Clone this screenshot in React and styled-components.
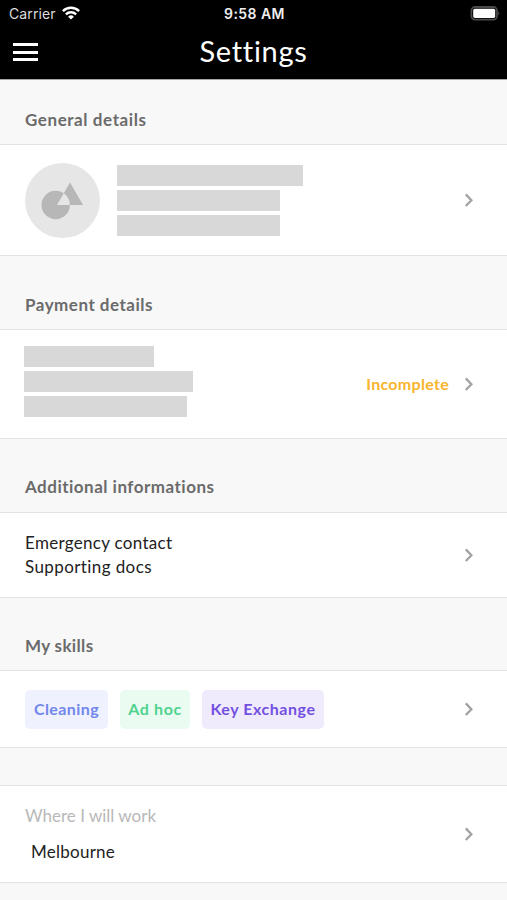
import React from 'react';
import styled, { createGlobalStyle } from 'styled-components'

const GlobalStyle = createGlobalStyle`
    * {
        box-sizing: border-box;
    }
    body {
        margin: 0;
        background: #f8f8f8;
        font-family: Lato, "Open Sans", sans-serif;
        font-size: 17px;
        font-variant-ligatures: none;
        color: #222;
        overflow: hidden;
    }
`

const Screen = styled.div`
    width: 100%;
    height: 900px;
    overflow: hidden;
    background: #f8f8f8;
`

const Header = styled.header`
    height: 80px;
    background: #000;
    color: #fff;
    border-bottom: 1px solid #a6a6a6;
`

const StatusBar = styled.div`
    display: grid;
    grid-template-columns: 1fr auto 1fr;
    align-items: center;
    height: 27px;
    padding: 0 6px 0 9px;
    font-family: Inter, sans-serif;
    font-size: 14px;
    line-height: 27px;
`

const Carrier = styled.div`
    display: flex;
    align-items: center;
    gap: 6px;
    color: #ddd;
    letter-spacing: .1px;
    svg {
        display: block;
        margin-top: -2px;
    }
`

const Clock = styled.div`
    margin-left: -1px;
    font-weight: 600;
    color: #eee;
    letter-spacing: .45px;
`

const Battery = styled.svg`
    justify-self: end;
`

const TitleBar = styled.div`
    display: grid;
    grid-template-columns: 26px 1fr 26px;
    align-items: center;
    height: 50px;
    padding: 0 13px;
    h1 {
        margin: -2px 0 0;
        font-size: 29px;
        font-weight: 400;
        line-height: 50px;
        text-align: center;
        letter-spacing: .7px;
    }
`

const MenuButton = styled.button`
    display: flex;
    flex-direction: column;
    gap: 4.5px;
    padding: 0;
    border: none;
    background: none;
    span {
        width: 25px;
        height: 3px;
        background: #fff;
    }
`

const SectionTitle = styled.h2`
    display: flex;
    align-items: flex-end;
    height: ${props => props.$height}px;
    margin: 0;
    padding: 0 25px ${props => props.$bottom || 12}px;
    font-size: 17px;
    font-weight: 700;
    line-height: 24px;
    color: #6b6b6b;
    letter-spacing: ${props => props.$spacing || 0}px;
`

const Row = styled.div`
    display: flex;
    align-items: center;
    height: ${props => props.$height}px;
    padding: 0 32px 0 25px;
    background: #fff;
    border-top: 1px solid #e2e2e2;
    border-bottom: 1px solid #e2e2e2;
`

const RowBody = styled.div`
    display: flex;
    flex: 1;
    align-items: center;
`

const Avatar = styled.svg`
    display: block;
    margin-right: 17px;
`

const Bars = styled.div`
    display: flex;
    flex-direction: column;
    gap: 4px;
    margin: ${props => props.$margin || 0};
`

const Bar = styled.div`
    width: ${props => props.$width}px;
    height: 21px;
    background: #d8d8d8;
`

const Status = styled.span`
    margin: -2px 14px 0 0;
    font-size: 16px;
    font-weight: 700;
    color: #f9b42d;
    letter-spacing: .3px;
`

const Line = styled.div`
    font-size: 17px;
    line-height: 24px;
    letter-spacing: ${props => props.$spacing || 0}px;
`

const Tags = styled.div`
    display: flex;
    gap: 12px;
`

const Tag = styled.span`
    width: ${props => props.$width}px;
    height: 39px;
    border-radius: 5px;
    font-size: 16px;
    font-weight: 700;
    line-height: 38px;
    text-align: center;
    white-space: nowrap;
    color: ${props => props.$color};
    background: ${props => props.$background};
    letter-spacing: ${props => props.$spacing || 0}px;
`

const Location = styled.div`
    display: flex;
    flex-direction: column;
    gap: 12px;
`

const LocationLabel = styled(Line)`
    color: #b8b8b8;
`

const LocationName = styled(Line)`
    padding-left: 6px;
`

const Spacer = styled.div`
    height: 37px;
`

const Arrow = () => (
    <svg width="12" height="16" viewBox="0 0 12 16">
        <path d="M2.8 2.4 L8.4 8.2 L2.8 14" fill="none" stroke="#a2a2a2" strokeWidth="2.3" />
    </svg>
)

const skills = [
    { name: 'Cleaning', width: 83, spacing: .4, color: '#7287ea', background: '#eff1fe' },
    { name: 'Ad hoc', width: 70, spacing: .65, color: '#4fd38f', background: '#eafbf2' },
    { name: 'Key Exchange', width: 122, spacing: .55, color: '#7351e0', background: '#f0eafd' }
]

const App = () => (
    <Screen>
        <GlobalStyle />
        <Header>
            <StatusBar>
                <Carrier>
                    Carrier
                    <svg width="18" height="14" viewBox="0 0 18 14">
                        <g fill="none" stroke="#fff" strokeWidth="2.4">
                            <path d="M.9 5.2 A11.4 11.4 0 0 1 17.1 5.2" />
                            <path d="M3.9 8.4 A7.2 7.2 0 0 1 14.1 8.4" />
                        </g>
                        <path d="M9 13.6 L6.1 10.7 A4.1 4.1 0 0 1 11.9 10.7 Z" fill="#fff" />
                    </svg>
                </Carrier>
                <Clock>9:58 AM</Clock>
                <Battery width="31" height="15" viewBox="0 0 31 15">
                    <rect x="1.4" y="1" width="25.6" height="12.6" rx="3.6" fill="none" stroke="#4a4a4a" strokeWidth="1.8" />
                    <rect x="3.2" y="2.7" width="22" height="9.2" rx="1.6" fill="#fff" />
                    <path d="M28.3 5 Q30.6 7.3 28.3 9.6 Z" fill="#4a4a4a" />
                </Battery>
            </StatusBar>
            <TitleBar>
                <MenuButton aria-label="Menu">
                    <span />
                    <span />
                    <span />
                </MenuButton>
                <h1>Settings</h1>
            </TitleBar>
        </Header>

        <SectionTitle $height={64} $spacing={.58}>General details</SectionTitle>
        <Row $height={112}>
            <RowBody>
                <Avatar width="75" height="75" viewBox="0 0 75 75">
                    <circle cx="37.5" cy="37.5" r="37.5" fill="#e6e6e6" />
                    <path
                        fill="#b7b7b7"
                        fillRule="evenodd"
                        d="M16.5 42 a14.2 14.2 0 1 0 28.4 0 a14.2 14.2 0 1 0 -28.4 0 Z M45 19.5 L58 42 L32 42 Z"
                    />
                </Avatar>
                <Bars>
                    <Bar $width={186} />
                    <Bar $width={163} />
                    <Bar $width={163} />
                </Bars>
            </RowBody>
            <Arrow />
        </Row>

        <SectionTitle $height={73} $spacing={.5}>Payment details</SectionTitle>
        <Row $height={110}>
            <RowBody>
                <Bars $margin="-6px 0 0 -1px">
                    <Bar $width={130} />
                    <Bar $width={169} />
                    <Bar $width={163} />
                </Bars>
            </RowBody>
            <Status>Incomplete</Status>
            <Arrow />
        </Row>

        <SectionTitle $height={73} $bottom={13} $spacing={.49}>Additional informations</SectionTitle>
        <Row $height={86}>
            <RowBody>
                <div>
                    <Line $spacing={.3}>Emergency contact</Line>
                    <Line $spacing={.4}>Supporting docs</Line>
                </div>
            </RowBody>
            <Arrow />
        </Row>

        <SectionTitle $height={72} $spacing={.35}>My skills</SectionTitle>
        <Row $height={78}>
            <RowBody>
                <Tags>
                    {skills.map(skill => (
                        <Tag
                            key={skill.name}
                            $width={skill.width}
                            $spacing={skill.spacing}
                            $color={skill.color}
                            $background={skill.background}
                        >
                            {skill.name}
                        </Tag>
                    ))}
                </Tags>
            </RowBody>
            <Arrow />
        </Row>

        <Spacer />
        <Row $height={98}>
            <RowBody>
                <Location>
                    <LocationLabel>Where I will work</LocationLabel>
                    <LocationName $spacing={.25}>Melbourne</LocationName>
                </Location>
            </RowBody>
            <Arrow />
        </Row>
    </Screen>
)

export default App;
